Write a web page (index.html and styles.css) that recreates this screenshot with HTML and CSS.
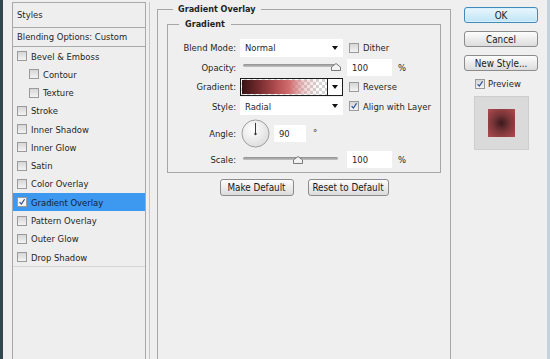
FILE: index.html
```html
<!DOCTYPE html>
<html lang="en">
<head>
    <meta charset="UTF-8">
    <meta name="viewport" content="width=device-width, initial-scale=1.0">
    <title>Layer Style</title>
    <link rel="stylesheet" href="styles.css">
</head>
<body>
    <div class="dialog">
        <div class="sidebar-wrap">
            <ul class="styles-list">
                <li class="head">Styles</li>
                <li class="blend">Blending Options: Custom</li>
                <li class="item"><span class="cb"></span>Bevel &amp; Emboss</li>
                <li class="item sub"><span class="cb"></span>Contour</li>
                <li class="item sub"><span class="cb"></span>Texture</li>
                <li class="item"><span class="cb"></span>Stroke</li>
                <li class="item"><span class="cb"></span>Inner Shadow</li>
                <li class="item"><span class="cb"></span>Inner Glow</li>
                <li class="item"><span class="cb"></span>Satin</li>
                <li class="item"><span class="cb"></span>Color Overlay</li>
                <li class="item on"><span class="cb checked"><svg viewBox="0 0 10 10"><path d="M2 5.2 L4.2 7.6 L8.2 1.6"/></svg></span>Gradient Overlay</li>
                <li class="item"><span class="cb"></span>Pattern Overlay</li>
                <li class="item"><span class="cb"></span>Outer Glow</li>
                <li class="item last"><span class="cb"></span>Drop Shadow</li>
            </ul>
        </div>

        <fieldset class="group outer">
            <legend>Gradient Overlay</legend>
            <fieldset class="group inner">
                <legend>Gradient</legend>
                <div class="form">
                    <label class="lbl">Blend Mode:</label>
                    <div class="select"><span>Normal</span><span class="arrow"></span></div>
                    <div class="extra"><span class="cb"></span>Dither</div>

                    <label class="lbl">Opacity:</label>
                    <div class="slider">
                        <div class="track"></div>
                        <svg class="thumb" style="left: 88px" viewBox="0 0 10 8"><path d="M0.5 7.5 V4 L5 0.5 L9.5 4 V7.5 Z"/></svg>
                    </div>
                    <div class="extra"><span class="num">100</span><span class="unit">%</span></div>

                    <label class="lbl">Gradient:</label>
                    <div class="gradient-pick">
                        <div class="gradient-bar"><div class="gradient-fill"></div></div>
                        <div class="drop"><span class="arrow"></span></div>
                    </div>
                    <div class="extra"><span class="cb"></span>Reverse</div>

                    <label class="lbl">Style:</label>
                    <div class="select"><span>Radial</span><span class="arrow"></span></div>
                    <div class="extra"><span class="cb checked"><svg viewBox="0 0 10 10"><path d="M2 5.2 L4.2 7.6 L8.2 1.6"/></svg></span>Align with Layer</div>

                    <label class="lbl">Angle:</label>
                    <div class="angle">
                        <svg class="dial" viewBox="0 0 30 30">
                            <defs>
                                <radialGradient id="dialFill" cx="40%" cy="35%" r="70%">
                                    <stop offset="0" stop-color="#ffffff"/>
                                    <stop offset="1" stop-color="#dcdcdc"/>
                                </radialGradient>
                            </defs>
                            <circle cx="15" cy="15" r="14" fill="url(#dialFill)" stroke="#9c9c9c"/>
                            <line x1="15" y1="15" x2="15" y2="4" stroke="#333" stroke-width="1"/>
                            <circle cx="15" cy="15.5" r="1.2" fill="#333"/>
                        </svg>
                        <span class="num small">90</span>
                        <span class="unit deg">°</span>
                    </div>
                    <div></div>

                    <label class="lbl">Scale:</label>
                    <div class="slider">
                        <div class="track"></div>
                        <svg class="thumb" style="left: 50px" viewBox="0 0 10 8"><path d="M0.5 7.5 V4 L5 0.5 L9.5 4 V7.5 Z"/></svg>
                    </div>
                    <div class="extra"><span class="num">100</span><span class="unit">%</span></div>
                </div>
            </fieldset>
            <div class="defaults">
                <button class="btn make">Make Default</button>
                <button class="btn reset">Reset to Default</button>
            </div>
        </fieldset>

        <div class="actions">
            <button class="btn primary">OK</button>
            <button class="btn">Cancel</button>
            <button class="btn">New Style...</button>
            <div class="preview-row"><span class="cb checked"><svg viewBox="0 0 10 10"><path d="M2 5.2 L4.2 7.6 L8.2 1.6"/></svg></span>Preview</div>
            <div class="preview-box"><div class="swatch"></div></div>
        </div>
    </div>
</body>
</html>
```

FILE: styles.css
```css
body {
    margin: 0;
    width: 550px;
    height: 359px;
    overflow: hidden;
    box-sizing: border-box;
    background-color: #efefef;
    border-left: 3px solid #34474e;
    border-right: 3px solid #c3d2dc;
    font-family: "DejaVu Sans Condensed", "DejaVu Sans", sans-serif;
    font-stretch: condensed;
    font-size: 9.4px;
    color: #1f1f1f;
}

.dialog {
    display: flex;
    align-items: flex-start;
    height: 359px;
    padding-left: 9px;
}

/* Styles list */
.sidebar-wrap {
    margin-top: 2px;
    padding-right: 3px;
    height: 357px;
    border-right: 1px solid #c6c6c6;
}

.styles-list {
    width: 134px;
    height: 357px;
    box-sizing: border-box;
    margin: 0;
    padding: 0;
    list-style: none;
    border: 1px solid #a9a9a9;
    border-bottom: none;
    background-color: #eeeeee;
}

.head {
    height: 24px;
    line-height: 23px;
    padding-left: 4px;
    border-bottom: 1px solid #a9a9a9;
}

.blend {
    height: 18px;
    line-height: 17px;
    padding-left: 4px;
    border-bottom: 1px solid #a9a9a9;
}

.item {
    height: 18.27px;
    display: flex;
    align-items: center;
    gap: 4px;
    padding-left: 4px;
}

.item.sub {
    padding-left: 16px;
}

.item.on {
    background-color: #3d98ef;
    color: #10223a;
}

.item.last {
    border-bottom: 1px solid #d6d6d6;
}

.cb {
    width: 10px;
    height: 10px;
    flex: none;
    box-sizing: border-box;
    border: 1px solid #9a9a9a;
    background: linear-gradient(#d6d6d6, #f3f3f3);
    display: inline-flex;
}

.cb svg {
    width: 100%;
    height: 100%;
}

.cb svg path {
    fill: none;
    stroke: #2b4f9c;
    stroke-width: 1.5;
}

.item.on .cb {
    background: #f4f4f4;
}

/* Group boxes */
.group {
    margin: 0;
    border: 1px solid #a6a6a6;
}

.group legend {
    font-weight: bold;
    font-size: 9px;
    line-height: 13px;
}

.outer {
    margin: 3px 0 0 7px;
    width: 294px;
    height: 356px;
    box-sizing: border-box;
    padding: 0 9px;
    border-bottom: none;
}

.outer > legend {
    margin-left: 6px;
    padding: 0 5px;
}

.inner {
    margin-top: 2px;
    padding: 0;
}

.inner > legend {
    margin-left: 11px;
    padding: 0 6px;
}

.form {
    display: grid;
    grid-template-columns: 68px 103px auto;
    grid-template-rows: 19px 20px 19px 20px 34px 19px;
    column-gap: 4px;
    align-items: center;
    padding: 7px 0 3px 0;
}

.lbl {
    text-align: right;
}

.select {
    height: 18px;
    background-color: #fff;
    display: flex;
    align-items: center;
    justify-content: space-between;
    padding: 0 5px;
}

.arrow {
    width: 0;
    height: 0;
    border-left: 3.5px solid transparent;
    border-right: 3.5px solid transparent;
    border-top: 4px solid #111;
}

.extra {
    display: flex;
    align-items: center;
    gap: 4px;
    margin-left: 2px;
}

.extra .num {
    margin-left: -2px;
}

.num {
    width: 45px;
    height: 17px;
    line-height: 17px;
    box-sizing: border-box;
    padding-left: 5px;
    background-color: #fff;
}

.num.small {
    width: 32px;
}

.unit {
    margin-left: 2px;
}

/* Sliders */
.slider {
    position: relative;
    height: 20px;
    margin-left: 3px;
    width: 95px;
}

.track {
    margin-top: 7px;
    height: 3px;
    border-radius: 2px;
    background: linear-gradient(#8e8e8e, #c4c4c4);
}

.thumb {
    position: absolute;
    top: 6px;
    width: 10px;
    height: 8px;
}

.thumb path {
    fill: #f2f2f2;
    stroke: #7a7a7a;
    stroke-width: 1;
}

/* Gradient picker */
.gradient-pick {
    display: flex;
    height: 18px;
}

.gradient-bar {
    width: 88px;
    box-sizing: border-box;
    border: 1px solid #1c1c1c;
    background-color: #fff;
    background-image:
        linear-gradient(45deg, #d4d4d4 25%, transparent 25%, transparent 75%, #d4d4d4 75%),
        linear-gradient(45deg, #d4d4d4 25%, transparent 25%, transparent 75%, #d4d4d4 75%);
    background-size: 6px 6px;
    background-position: 0 0, 3px 3px;
    padding: 1px;
}

.gradient-fill {
    height: 100%;
    background: linear-gradient(to right, #3a1214 0%, #7a2e31 22%, #b44f52 42%, #d06c6e 56%, rgba(224, 140, 142, 0.4) 74%, rgba(230, 160, 160, 0) 92%);
}

.drop {
    width: 15px;
    box-sizing: border-box;
    border: 1px solid #1c1c1c;
    border-left: none;
    background-color: #fff;
    display: flex;
    align-items: center;
    justify-content: center;
}

/* Angle */
.angle {
    display: flex;
    align-items: center;
    gap: 4px;
    padding-left: 1px;
}

.dial {
    width: 29px;
    height: 29px;
}

.unit.deg {
    margin-left: 3px;
    align-self: flex-start;
    margin-top: 8px;
}

/* Buttons */
.btn {
    height: 17px;
    padding: 0;
    border: 1px solid #8c8c8c;
    border-radius: 3px;
    background: linear-gradient(#fdfdfd, #dcdcdc);
    font-family: inherit;
    font-stretch: condensed;
    font-size: 9.8px;
    color: #1a1a1a;
}

.defaults {
    display: flex;
    justify-content: center;
    gap: 14px;
    margin-top: 6px;
}

.btn.make {
    width: 74px;
}

.btn.reset {
    width: 81px;
}

.actions {
    margin-left: 13px;
    width: 74px;
    padding-top: 7px;
    display: flex;
    flex-direction: column;
    gap: 8px;
}

.actions .btn {
    height: 16px;
    width: 74px;
}

.btn.primary {
    border-color: #3f8bbb;
    background: linear-gradient(#eaf6fd, #bfe4f6);
    box-shadow: inset 0 0 0 1px #d8f0fb;
}

.preview-row {
    display: flex;
    align-items: center;
    gap: 3px;
    padding-left: 11px;
    margin-top: -1px;
}

.preview-box {
    margin-left: 10px;
    margin-top: -1px;
    width: 55px;
    height: 54px;
    box-sizing: border-box;
    border: 1px solid #cdcdcd;
    background-color: #dadada;
    display: flex;
    align-items: center;
    justify-content: center;
}

.swatch {
    width: 27px;
    height: 28px;
    background: radial-gradient(circle, #3a1a1d 0%, #7a3538 45%, #b14c50 100%);
}
```
